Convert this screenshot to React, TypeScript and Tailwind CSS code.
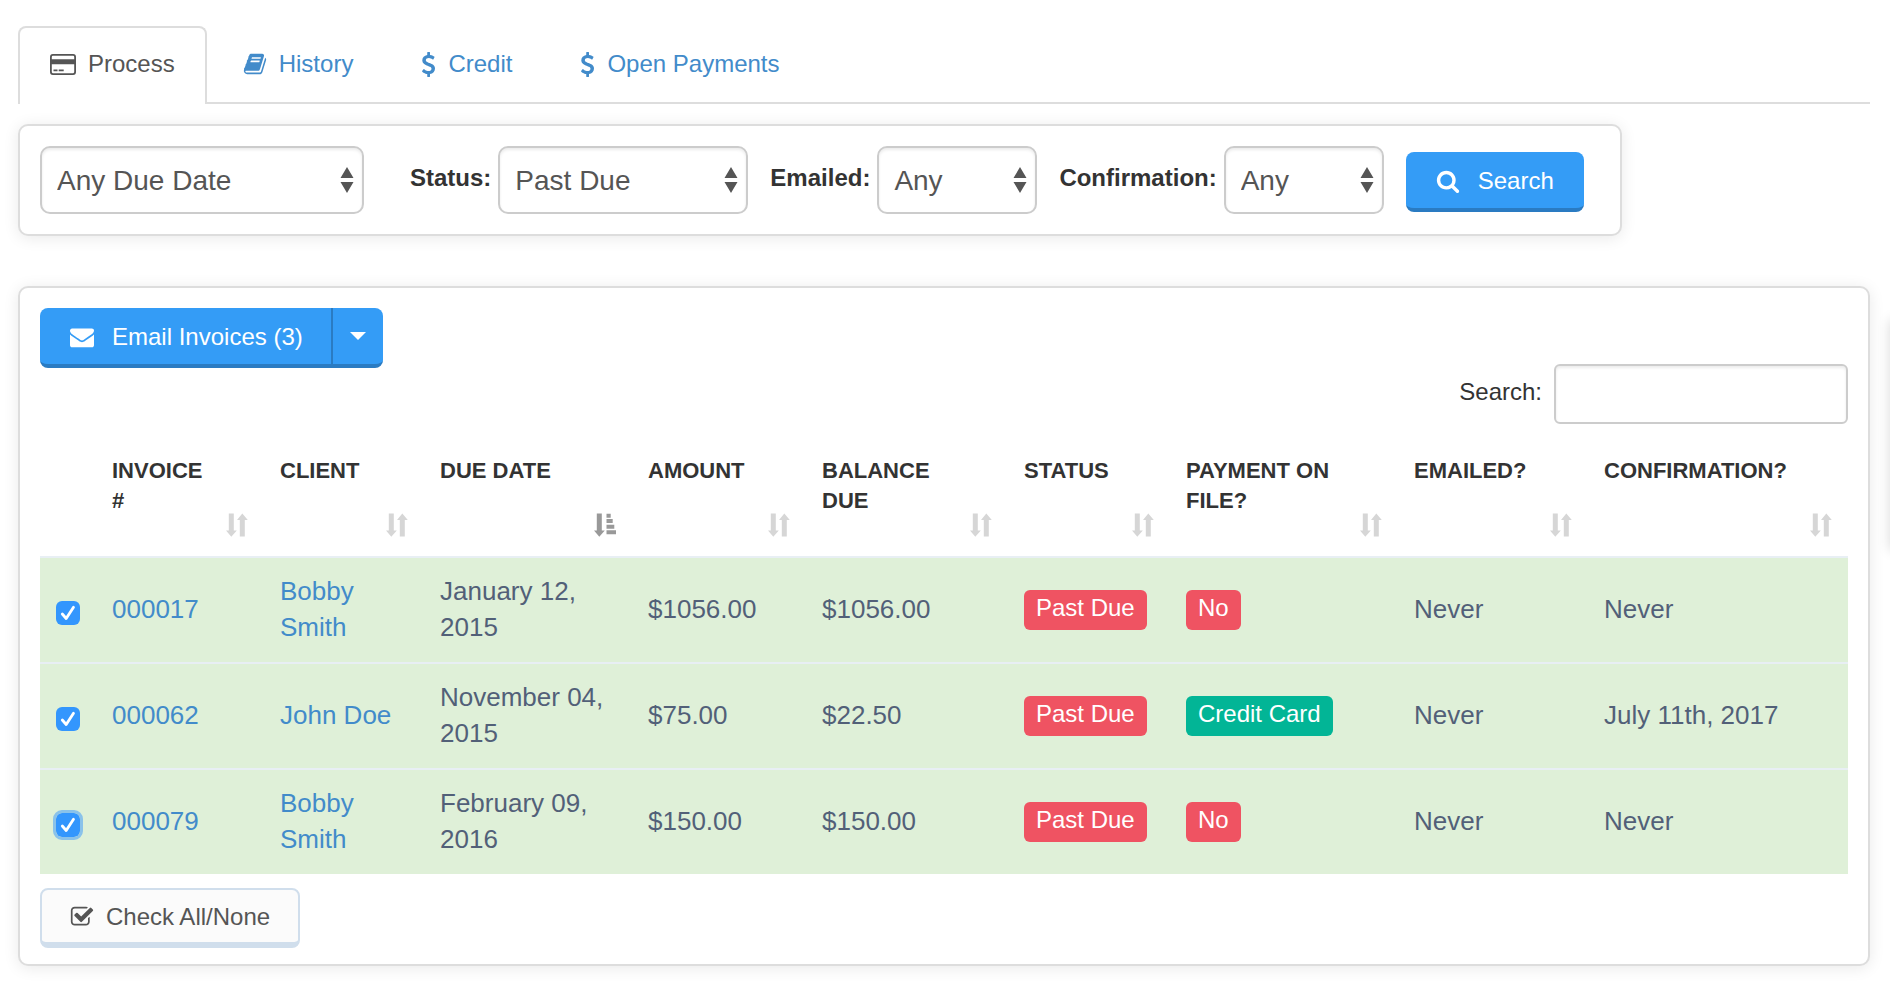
import type { ReactNode } from "react";

type IconProps = { className?: string };

function FaIcon({ d, viewBox = "0 0 1792 1792", className }: IconProps & { d: string; viewBox?: string }) {
  return (
    <svg viewBox={viewBox} fill="currentColor" aria-hidden="true" className={className}>
      <path d={d} />
    </svg>
  );
}

const CHECK_SQUARE =
  "M1472 930v318q0 119-84.5 203.5t-203.5 84.5h-832q-119 0-203.5-84.5t-84.5-203.5v-832q0-119 84.5-203.5t203.5-84.5h832q63 0 117 25 15 7 18 23 3 17-9 29l-49 49q-10 10-23 10-3 0-9-2-23-6-45-6h-832q-66 0-113 47t-47 113v832q0 66 47 113t113 47h832q66 0 113-47t47-113v-254q0-13 9-22l64-64q10-10 23-10 6 0 12 3 20 8 20 29zm231-489l-814 814q-24 24-57 24t-57-24l-430-430q-24-24-24-57t24-57l110-110q24-24 57-24t57 24l263 263 647-647q24-24 57-24t57 24l110 110q24 24 24 57t-24 57z";
const BOOK =
  "M1703 478q40 57 18 129l-275 906q-19 64-76.5 107.5t-122.5 43.5h-923q-77 0-148.5-53.5t-99.5-131.5q-24-67-2-127 0-4 3-27t4-37q1-8-3-21.5t-3-19.5q2-11 8-21t16.5-23.5 16.5-23.5q23-38 45-91.5t30-91.5q3-10 .5-30t-.5-28q3-11 17-28t17-23q21-36 42-92t25-90q1-9-2.5-32t.5-28q4-13 22-30.5t22-22.5q19-26 42.5-84.5t27.5-96.5q1-8-3-25.5t-2-26.5q2-8 9-18t18-23 17-21q8-12 16.5-30.5t15-35 16-36 19.5-32 26.5-23.5 36-11.5 47.5 5.5l-1 3q38-9 51-9h761q74 0 114 56t18 130l-274 906q-36 119-71.5 153.5t-128.5 34.5h-869q-27 0-38 15-11 16-1 43 24 70 144 70h923q29 0 56-15.5t35-41.5l300-987q7-22 5-57 38 15 59 43zm-1064 2q-4 13 2 22.5t20 9.5h608q13 0 25.5-9.5t16.5-22.5l21-64q4-13-2-22.5t-20-9.5h-608q-13 0-25.5 9.5t-16.5 22.5zm-83 256q-4 13 2 22.5t20 9.5h608q13 0 25.5-9.5t16.5-22.5l21-64q4-13-2-22.5t-20-9.5h-608q-13 0-25.5 9.5t-16.5 22.5z";
const ENVELOPE =
  "M1792 710v794q0 66-47 113t-113 47h-1472q-66 0-113-47t-47-113v-794q44 49 101 87 362 246 497 345 57 42 92.5 65.5t94.5 48 110 24.5h2q51 0 110-24.5t94.5-48 92.5-65.5q170-123 498-345 57-39 100-87zm0-294q0 79-49 151t-122 123q-376 261-468 325-10 7-42.5 31t-54 38.8-52 33.2-57.5 27-50 9h-2q-23 0-50-9t-57.5-27-52-33.2-54-38.8-42.5-31q-91-64-262-182.5t-205-142.5q-62-42-117-115.5t-55-136.5q0-78 41.5-130t118.5-52h1472q65 0 112.5 47t47.5 113z";
const SEARCH =
  "M1216 832q0-185-131.5-316.5t-316.5-131.5-316.5 131.5-131.5 316.5 131.5 316.5 316.5 131.5 316.5-131.5 131.5-316.5zm512 832q0 52-38 90t-90 38q-54 0-90-38l-343-342q-179 124-399 124-143 0-273.5-55.5t-225-150-150-225-55.5-273.5 55.5-273.5 150-225 225-150 273.5-55.5 273.5 55.5 225 150 150 225 55.5 273.5q0 220-124 399l343 343q37 37 37 90z";
const DOLLAR =
  "M1362 1185q0 153-99.5 263.5t-258.5 136.5v175q0 14-9 23t-23 9h-135q-13 0-22.5-9.5t-9.5-22.5v-175q-66-9-127.5-31t-101.5-44.5-74-48-46.5-37.5-17.5-18q-17-21-2-41l103-135q7-10 23-12 15-2 24 9l2 2q113 99 243 125 37 8 74 8 81 0 142.5-43t61.5-122q0-28-15-53t-33.5-42-58.5-37.5-66-32-80-32.5q-39-16-61.5-25t-61.5-26.5-62.5-31-56.5-35.5-53.5-42.5-43.5-49-35.5-58-21-66.5-8.5-78q0-138 98-242t255-134v-180q0-13 9.5-22.5t22.5-9.5h135q14 0 23 9t9 23v176q57 6 110.5 23t87 33.5 63.5 37.5 39 29 15 14q17 18 5 38l-81 146q-8 15-23 16-14 3-27-7-3-3-14.5-12t-39-26.5-58.5-32-74.5-26-85.5-11.5q-95 0-155 43t-60 111q0 26 8.5 48t29.5 41.5 39.5 33 56 31 60.5 27 70 27.5q53 20 81 31.5t76 35 75.5 42.5 62 50 53 63.5 31.5 76.5 13 94z";

function CardIcon({ className }: IconProps) {
  return (
    <svg viewBox="0 0 26 21" fill="none" aria-hidden="true" className={className}>
      <rect x="0.9" y="0.9" width="24.2" height="19.2" rx="2" stroke="currentColor" strokeWidth="1.8" />
      <path fill="currentColor" d="M1 5.200h24v5H1zM3.500 15.600h4v1.700h-4zM8.700 15.600h5v1.700h-5z" />
    </svg>
  );
}

function SortIcon({ active }: { active: boolean }) {
  return (
    <svg
      viewBox="0 0 22 24"
      fill="currentColor"
      aria-hidden="true"
      className={active ? "h-6 w-[22px] shrink-0 text-[#999]" : "h-6 w-[22px] shrink-0 text-[#d6d6d6]"}
    >
      <path d="M2.800 0.500h5V17.500h3L5.300 23.700L0 17.500h2.800z" />
      {active ? (
        <path d="M12.500 0.800h4.200v4h-4.200zM12.500 6h6.200v4h-6.200zM12.500 11.800h7.800v4h-7.800zM12.500 17.200h9.500v4h-9.500z" />
      ) : (
        <path d="M13.800 23.500h5V7h3L16.300 0.500L11 7h2.800z" />
      )}
    </svg>
  );
}

function Tab({ icon, label, active = false }: { icon: ReactNode; label: string; active?: boolean }) {
  return (
    <a
      href="#"
      aria-current={active ? "page" : undefined}
      className={
        active
          ? "-mb-0.5 flex h-[78px] items-center gap-3 rounded-t-lg border-2 border-b-0 border-[#ddd] bg-white px-[30px] pb-1 text-[#555]"
          : "flex h-[76px] items-center gap-3 px-[30px] text-[#428bca]"
      }
    >
      {icon}
      {label}
    </a>
  );
}

function Select({ id, value, className }: { id: string; value: string; className: string }) {
  return (
    <span className="grid items-center">
      <select
        id={id}
        aria-label={id}
        defaultValue={value}
        className={`${className} col-start-1 row-start-1 h-[68px] appearance-none rounded-[10px] border-2 border-[#ccc] bg-white px-[15px] pt-0.5 text-[28px] text-[#555] shadow-[inset_0_2px_3px_rgba(0,0,0,0.08)]`}
      >
        <option>{value}</option>
      </select>
      <svg
        viewBox="0 0 14 26"
        fill="currentColor"
        aria-hidden="true"
        className="pointer-events-none col-start-1 row-start-1 mr-2.5 h-[26px] w-3.5 justify-self-end text-[#555]"
      >
        <path d="M7 0l6.500 11H.5zM7 26l6.500-11H.5z" />
      </svg>
    </span>
  );
}

function Badge({ children, tone }: { children: ReactNode; tone: "red" | "green" }) {
  return (
    <span
      className={`${tone === "red" ? "bg-[#ef5362]" : "bg-[#02b596]"} block w-fit rounded-md px-3 pt-1.5 pb-2.5 text-2xl leading-6 whitespace-nowrap text-white`}
    >
      {children}
    </span>
  );
}

const columns = [
  { label: "Invoice #", width: "w-[168px]" },
  { label: "Client", width: "w-[160px]" },
  { label: "Due Date", width: "w-[208px]", sorted: true },
  { label: "Amount", width: "w-[174px]" },
  { label: "Balance Due", width: "w-[202px]" },
  { label: "Status", width: "w-[162px]" },
  { label: "Payment on File?", width: "w-[228px]" },
  { label: "Emailed?", width: "w-[190px]" },
  { label: "Confirmation?", width: "w-[260px]" },
];

const invoices = [
  { id: "000017", client: "Bobby Smith", due: "January 12, 2015", amount: "$1056.00", balance: "$1056.00", card: false, confirmed: "Never", focused: false },
  { id: "000062", client: "John Doe", due: "November 04, 2015", amount: "$75.00", balance: "$22.50", card: true, confirmed: "July 11th, 2017", focused: false },
  { id: "000079", client: "Bobby Smith", due: "February 09, 2016", amount: "$150.00", balance: "$150.00", card: false, confirmed: "Never", focused: true },
];

const PANEL = "rounded-[10px] border-2 border-[#ddd] bg-white shadow-[0_2px_16px_rgba(0,0,0,0.09)]";
const FILTER_GROUP = "flex items-center gap-[7px]";
const FILTER_LABEL = "pb-1 font-bold text-[#333]";
const TEXT_CELL = "px-4 pb-0.5";
const LINK_CELL = "px-4 pb-0.5 text-[#428bca]";

export default function App() {
  return (
    <div className="relative min-h-screen overflow-hidden bg-white py-[26px] pr-5 pl-[18px] font-['Liberation_Sans',Arial,sans-serif] text-2xl text-[#333]">
      <nav className="flex border-b-2 border-[#ddd]">
        <Tab active label="Process" icon={<CardIcon className="h-[21px] w-[26px]" />} />
        <span className="w-1.5" />
        <Tab label="History" icon={<FaIcon d={BOOK} className="size-6" />} />
        <span className="w-2" />
        <Tab label="Credit" icon={<FaIcon d={DOLLAR} viewBox="384 0 1024 1792" className="h-[25px] w-[15px]" />} />
        <span className="w-2" />
        <Tab label="Open Payments" icon={<FaIcon d={DOLLAR} viewBox="384 0 1024 1792" className="h-[25px] w-[15px]" />} />
      </nav>

      <form className={`${PANEL} mt-5 flex w-fit items-center py-5 pr-9 pl-5`} onSubmit={(e) => e.preventDefault()}>
        <Select id="due-date" value="Any Due Date" className="w-[324px]" />
        <div className={`${FILTER_GROUP} ml-[46px]`}>
          <label htmlFor="status" className={FILTER_LABEL}>Status:</label>
          <Select id="status" value="Past Due" className="w-[250px]" />
        </div>
        <div className={`${FILTER_GROUP} ml-[22px]`}>
          <label htmlFor="emailed" className={FILTER_LABEL}>Emailed:</label>
          <Select id="emailed" value="Any" className="w-40" />
        </div>
        <div className={`${FILTER_GROUP} ml-[22px]`}>
          <label htmlFor="confirmation" className={FILTER_LABEL}>Confirmation:</label>
          <Select id="confirmation" value="Any" className="w-40" />
        </div>
        <button className="mt-1 ml-[22px] flex h-[60px] items-center gap-[18px] rounded-lg border-b-4 border-[#2a7bc2] bg-[#349cf6] px-[30px] pt-0.5 text-white">
          <FaIcon d={SEARCH} className="size-6" />
          Search
        </button>
      </form>

      <section className={`${PANEL} mt-[50px] px-5 pt-5 pb-4`}>
        <div className="flex">
          <button className="flex h-[60px] items-center gap-[18px] rounded-l-lg border-b-4 border-[#2a7bc2] bg-[#349cf6] px-[30px] pt-0.5 pr-7 text-white">
            <FaIcon d={ENVELOPE} className="size-6" />
            Email Invoices (3)
          </button>
          <button
            aria-label="More email options"
            className="flex h-[60px] w-[52px] items-center justify-center rounded-r-lg border-b-4 border-l-2 border-[#2a7bc2] bg-[#349cf6] text-white"
          >
            <svg viewBox="0 0 16 8" fill="currentColor" aria-hidden="true" className="h-2 w-4">
              <path d="M0 0h16L8 8z" />
            </svg>
          </button>
        </div>

        <div className="-mt-1 flex items-center justify-end gap-3">
          <label htmlFor="table-search" className="pb-1">Search:</label>
          <input
            id="table-search"
            type="text"
            className="h-[60px] w-[294px] rounded-md border-2 border-[#ccc] px-3 shadow-[inset_0_2px_3px_rgba(0,0,0,0.08)]"
          />
        </div>

        <table className="mt-4 w-full table-fixed border-separate border-spacing-0 text-left">
          <thead>
            <tr>
              <th className="w-14" />
              {columns.map((c) => (
                <th key={c.label} className={`${c.width} px-4 pt-4 pb-[19px] align-top`}>
                  <div className="flex min-h-[81px] justify-between gap-4">
                    <span className="text-[22px] leading-[30px] uppercase">{c.label}</span>
                    <span className="self-end">
                      <SortIcon active={!!c.sorted} />
                    </span>
                  </div>
                </th>
              ))}
            </tr>
          </thead>
          <tbody className="text-[26px] leading-9 text-[#526078]">
            {invoices.map((inv) => (
              <tr key={inv.id} className="h-[106px] bg-[#dff0d8] [&>td]:border-t-2 [&>td]:border-[#e8eff4]">
                <td className="pl-4">
                  <span className="mt-1.5 grid w-6">
                    <input
                      type="checkbox"
                      defaultChecked
                      aria-label={`Select invoice ${inv.id}`}
                      className={`${inv.focused ? "outline-3 outline-[#8ac2ea]" : ""} col-start-1 row-start-1 size-6 appearance-none rounded-md bg-[#3396fd]`}
                    />
                    <svg
                      viewBox="0 0 24 24"
                      fill="none"
                      stroke="white"
                      strokeWidth="2.800"
                      strokeLinecap="round"
                      strokeLinejoin="round"
                      aria-hidden="true"
                      className="pointer-events-none col-start-1 row-start-1 size-6"
                    >
                      <path d="M6.300 13l3.900 4.500L17.500 6.300" />
                    </svg>
                  </span>
                </td>
                <td className={LINK_CELL}><a href="#">{inv.id}</a></td>
                <td className={LINK_CELL}><a href="#">{inv.client}</a></td>
                <td className={TEXT_CELL}>{inv.due}</td>
                <td className={TEXT_CELL}>{inv.amount}</td>
                <td className={TEXT_CELL}>{inv.balance}</td>
                <td className="px-4"><Badge tone="red">Past Due</Badge></td>
                <td className="px-4">
                  <Badge tone={inv.card ? "green" : "red"}>{inv.card ? "Credit Card" : "No"}</Badge>
                </td>
                <td className={TEXT_CELL}>Never</td>
                <td className={TEXT_CELL}>{inv.confirmed}</td>
              </tr>
            ))}
          </tbody>
        </table>

        <button className="mt-3.5 flex h-[60px] items-center gap-3 rounded-lg border-2 border-b-6 border-[#d0deec] bg-[#fbfbfb] px-7 pt-0.5 text-[#555]">
          <FaIcon d={CHECK_SQUARE} className="size-6" />
          Check All/None
        </button>
      </section>

      {/* Collapsed side drawer: only its shadow shows at the window edge */}
      <aside aria-hidden="true" className="absolute top-[320px] left-full h-[230px] w-10 shadow-[0_0_12px_rgba(0,0,0,0.15)]" />
    </div>
  );
}
